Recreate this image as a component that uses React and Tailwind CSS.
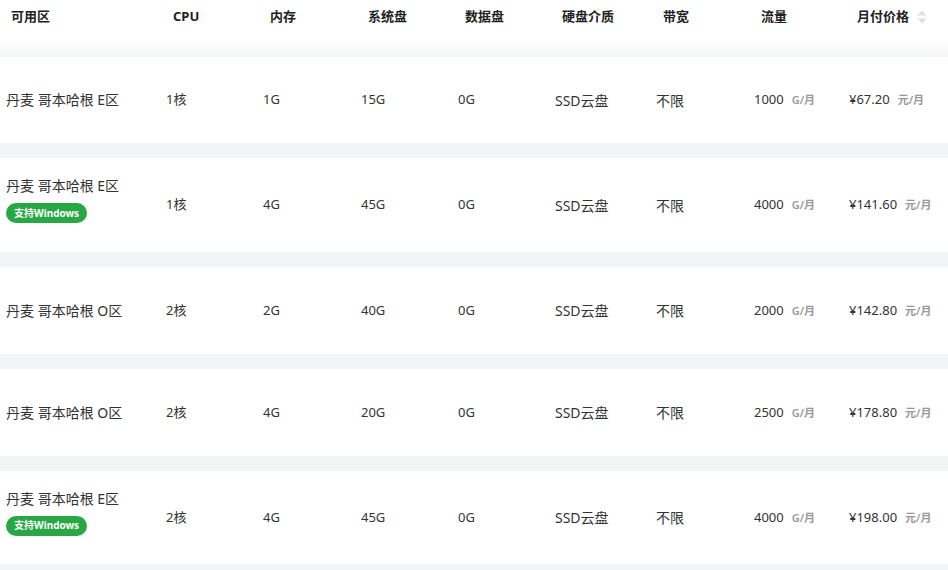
const rows = [
  { zone: '丹麦 哥本哈根 E区', win: false, cpu: '1核', mem: '1G', sys: '15G', data: '0G', traffic: '1000', price: '¥67.20', h: 'h-[86px]' },
  { zone: '丹麦 哥本哈根 E区', win: true, cpu: '1核', mem: '4G', sys: '45G', data: '0G', traffic: '4000', price: '¥141.60', h: 'h-[94px]' },
  { zone: '丹麦 哥本哈根 O区', win: false, cpu: '2核', mem: '2G', sys: '40G', data: '0G', traffic: '2000', price: '¥142.80', h: 'h-[87px]' },
  { zone: '丹麦 哥本哈根 O区', win: false, cpu: '2核', mem: '4G', sys: '20G', data: '0G', traffic: '2500', price: '¥178.80', h: 'h-[87px]' },
  { zone: '丹麦 哥本哈根 E区', win: true, cpu: '2核', mem: '4G', sys: '45G', data: '0G', traffic: '4000', price: '¥198.00', h: 'h-[93px]' },
]

const cols = 'grid grid-cols-[160px_97px_98px_97px_97px_101px_98px_95px_1fr] items-center'

function SortIcon() {
  return (
    <svg className="ml-[8px] h-[16px] w-[10px]" viewBox="0 0 10 16">
      <path d="M5 1.5 L9.5 6.5 H0.5 Z" fill="#dcdee1" />
      <path d="M5 14.5 L9.5 9.5 H0.5 Z" fill="#dcdee1" />
    </svg>
  )
}

export default function App() {
  return (
    <div className="h-[570px] w-[948px] overflow-hidden bg-[#f3f4f5] text-[13px] text-[#333]" style={{ fontFamily: '"Noto Sans", "Noto Sans CJK SC", sans-serif' }}>
      <div className={`${cols} h-[42px] bg-white pb-[8px] font-bold text-[#222]`}>
        <span className="pl-[11px]">可用区</span>
        <span className="pl-[13px]">CPU</span>
        <span className="pl-[13px]">内存</span>
        <span className="pl-[13px]">系统盘</span>
        <span className="pl-[13px]">数据盘</span>
        <span className="pl-[13px]">硬盘介质</span>
        <span className="pl-[13px]">带宽</span>
        <span className="pl-[13px]">流量</span>
        <span className="flex items-center pl-[14px]">
          月付价格
          <SortIcon />
        </span>
      </div>
      <div className="h-[15px] bg-gradient-to-b from-white to-[#f3f4f5]" />

      {rows.map((r, i) => (
        <div key={i} className={`${cols} ${r.h} mb-[15px] bg-white`}>
          <div className={r.win ? 'mb-[11px] pl-[6px]' : 'pl-[6px]'}>
            <p className="text-[14px] leading-[20px]">{r.zone}</p>
            {r.win && (
              <span className="mt-[7px] inline-flex h-[20px] items-center rounded-full bg-[#28a745] px-[8px] text-[10px] font-bold text-white">
                支持Windows
              </span>
            )}
          </div>
          <span className="pl-[6px]">{r.cpu}</span>
          <span className="pl-[6px]">{r.mem}</span>
          <span className="pl-[6px]">{r.sys}</span>
          <span className="pl-[6px]">{r.data}</span>
          <span className="pl-[6px] text-[14px]">SSD云盘</span>
          <span className="pl-[6px] text-[14px]">不限</span>
          <span className="pl-[6px]">
            {r.traffic}
            <span className="ml-[8px] text-[11px] font-semibold text-[#999]">G/月</span>
          </span>
          <span className="whitespace-nowrap pl-[6px]">
            {r.price}
            <span className="ml-[8px] text-[11px] font-semibold text-[#999]">元/月</span>
          </span>
        </div>
      ))}
    </div>
  )
}
